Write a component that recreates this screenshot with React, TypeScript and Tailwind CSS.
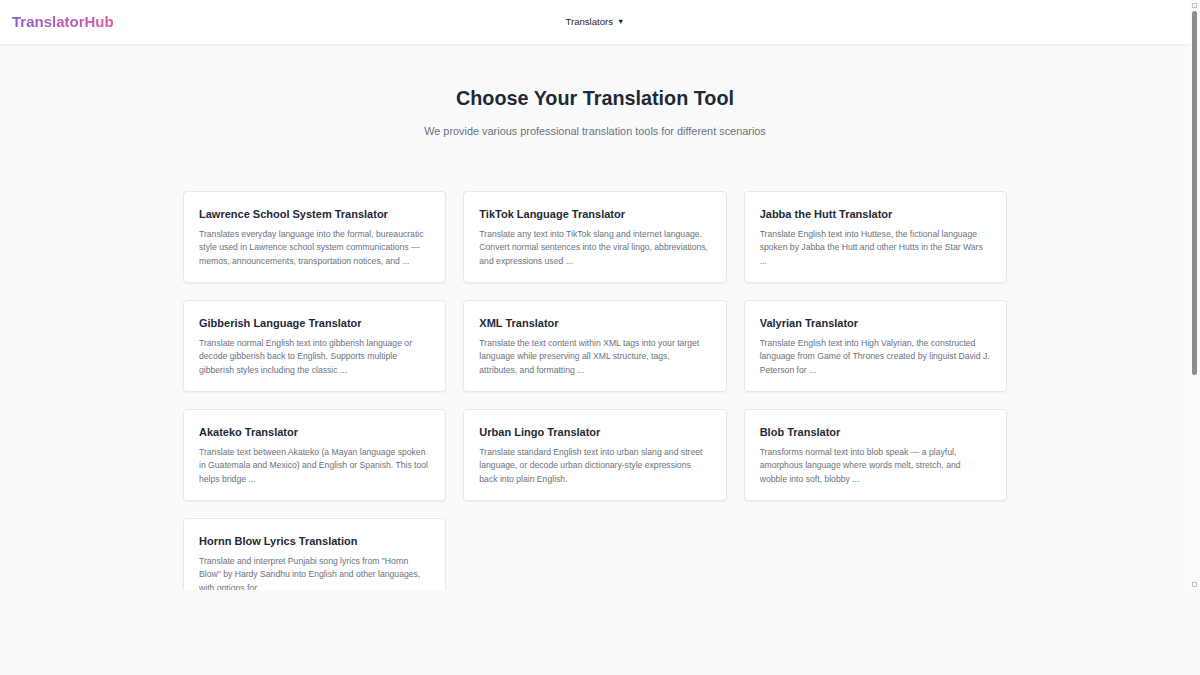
import React from "react";

const tools = [
  {
    title: "Lawrence School System Translator",
    desc: "Translates everyday language into the formal, bureaucratic style used in Lawrence school system communications — memos, announcements, transportation notices, and ...",
  },
  {
    title: "TikTok Language Translator",
    desc: "Translate any text into TikTok slang and internet language. Convert normal sentences into the viral lingo, abbreviations, and expressions used ...",
  },
  {
    title: "Jabba the Hutt Translator",
    desc: "Translate English text into Huttese, the fictional language spoken by Jabba the Hutt and other Hutts in the Star Wars ...",
  },
  {
    title: "Gibberish Language Translator",
    desc: "Translate normal English text into gibberish language or decode gibberish back to English. Supports multiple gibberish styles including the classic ...",
  },
  {
    title: "XML Translator",
    desc: "Translate the text content within XML tags into your target language while preserving all XML structure, tags,\nattributes, and formatting ...",
  },
  {
    title: "Valyrian Translator",
    desc: "Translate English text into High Valyrian, the constructed language from Game of Thrones created by linguist David J. Peterson for ...",
  },
  {
    title: "Akateko Translator",
    desc: "Translate text between Akateko (a Mayan language spoken in Guatemala and Mexico) and English or Spanish. This tool helps bridge ...",
  },
  {
    title: "Urban Lingo Translator",
    desc: "Translate standard English text into urban slang and street language, or decode urban dictionary-style expressions back into plain English.",
  },
  {
    title: "Blob Translator",
    desc: "Transforms normal text into blob speak — a playful, amorphous language where words melt, stretch, and\nwobble into soft, blobby ...",
  },
  {
    title: "Hornn Blow Lyrics Translation",
    desc: "Translate and interpret Punjabi song lyrics from \"Hornn Blow\" by Hardy Sandhu into English and other languages, with options for ...",
  },
];

export default function App() {
  return (
    <div
      className="h-[675px] w-[1200px] bg-[#f9fafb] overflow-hidden"
      style={{ fontFamily: '"Liberation Sans", Arial, sans-serif' }}
    >
      <div className="h-[590px] flex">
        <div className="w-[1190px] h-full overflow-hidden">
          <header className="h-[44px] bg-white shadow-[0_1px_3px_rgba(0,0,0,0.08)] grid grid-cols-3 items-center px-[12px] relative z-10">
            <div className="text-[15px] font-bold bg-gradient-to-r from-[#8a5cc8] to-[#dc55a2] bg-clip-text text-transparent w-fit">
              TranslatorHub
            </div>
            <div className="flex justify-center">
              <span className="text-[9.6px] text-[#1f2937] flex items-center gap-[4px]">
                Translators<span className="text-[7.5px]">▼</span>
              </span>
            </div>
            <div />
          </header>
          <main className="pt-[42px]">
            <h1 className="text-center text-[19.8px] leading-[24px] font-bold text-[#1f2937]">
              Choose Your Translation Tool
            </h1>
            <p className="text-center mt-[13px] text-[10.9px] leading-[16px] text-[#6b7280]">
              We provide various professional translation tools for different scenarios
            </p>
            <div className="mt-[52px] w-[824px] mx-auto grid grid-cols-3 gap-[17px]">
              {tools.map((t) => (
                <div
                  key={t.title}
                  className="bg-white border border-[#e5e7eb] rounded-[4px] shadow-[0_1px_2px_rgba(0,0,0,0.05)] px-[15px] pt-[14px] pb-[14px]"
                >
                  <h3 className="text-[11px] leading-[16.5px] font-bold text-[#1f2937]">
                    {t.title}
                  </h3>
                  <p className="mt-[5px] whitespace-pre-line text-[8.64px] leading-[13.5px] text-[#6b7280]">
                    {t.desc}
                  </p>
                </div>
              ))}
            </div>
          </main>
        </div>
        <div className="w-[10px] h-full bg-[#fbfbfb] flex flex-col items-center pt-[3px] pb-[3px]">
          <svg width="5" height="5" viewBox="0 0 5 5" className="shrink-0 -translate-x-[1px]">
            <rect x="0.5" y="0.5" width="4" height="4" fill="none" stroke="#c4c4c4" strokeWidth="1" />
          </svg>
          <div className="mt-[3px] w-[5px] h-[364px] rounded-full bg-[#8c8c8c] -translate-x-[1px]" />
          <div className="flex-1" />
          <svg width="5" height="5" viewBox="0 0 5 5" className="shrink-0 -translate-x-[1px]">
            <rect x="0.5" y="0.5" width="4" height="4" fill="none" stroke="#c4c4c4" strokeWidth="1" />
          </svg>
        </div>
      </div>
    </div>
  );
}
